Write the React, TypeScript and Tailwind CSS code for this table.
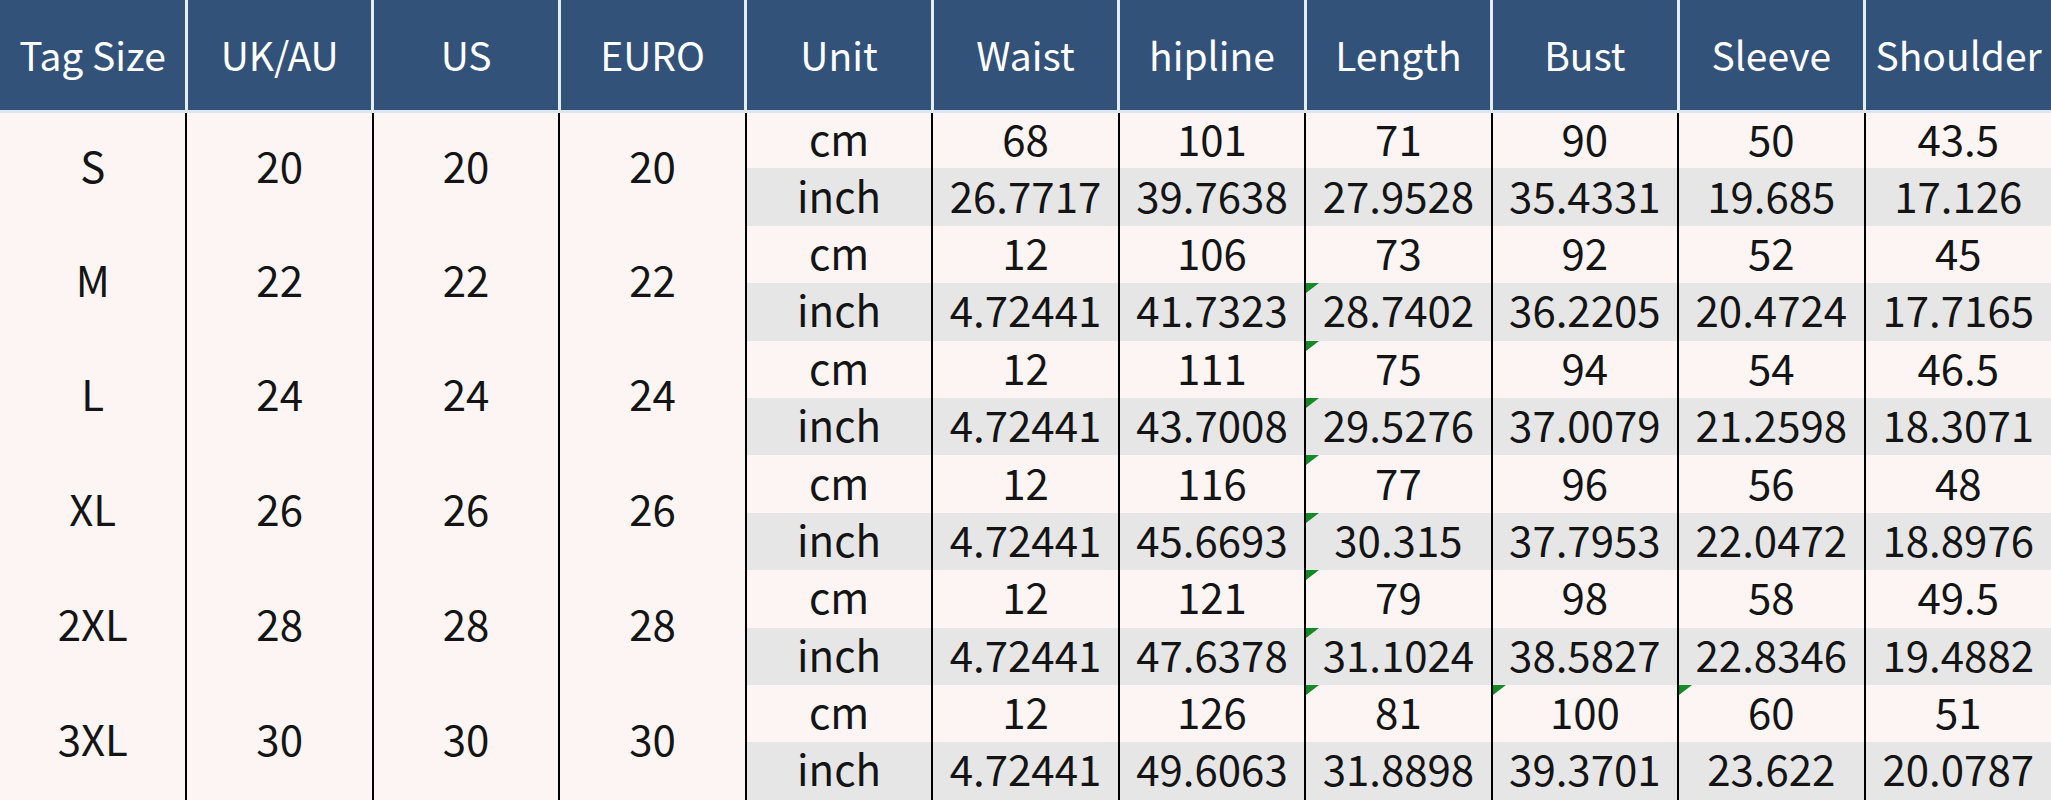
import React from 'react';

type Size = {
  tag: string;
  n: string;
  cm: string[];
  inch: string[];
};

const headers = ['Tag Size', 'UK/AU', 'US', 'EURO', 'Unit', 'Waist', 'hipline', 'Length', 'Bust', 'Sleeve', 'Shoulder'];

const sizes: Size[] = [
  { tag: 'S', n: '20', cm: ['68', '101', '71', '90', '50', '43.5'], inch: ['26.7717', '39.7638', '27.9528', '35.4331', '19.685', '17.126'] },
  { tag: 'M', n: '22', cm: ['12', '106', '73', '92', '52', '45'], inch: ['4.72441', '41.7323', '28.7402', '36.2205', '20.4724', '17.7165'] },
  { tag: 'L', n: '24', cm: ['12', '111', '75', '94', '54', '46.5'], inch: ['4.72441', '43.7008', '29.5276', '37.0079', '21.2598', '18.3071'] },
  { tag: 'XL', n: '26', cm: ['12', '116', '77', '96', '56', '48'], inch: ['4.72441', '45.6693', '30.315', '37.7953', '22.0472', '18.8976'] },
  { tag: '2XL', n: '28', cm: ['12', '121', '79', '98', '58', '49.5'], inch: ['4.72441', '47.6378', '31.1024', '38.5827', '22.8346', '19.4882'] },
  { tag: '3XL', n: '30', cm: ['12', '126', '81', '100', '60', '51'], inch: ['4.72441', '49.6063', '31.8898', '39.3701', '23.622', '20.0787'] },
];

// sub-row index -> value columns (0 = Waist) carrying the little green corner mark
const marks: Record<number, number[]> = {
  3: [2], 4: [2], 5: [2], 6: [2], 7: [2], 8: [2], 9: [2], 10: [2, 3, 4],
};

const Mark = () => (
  <svg className="absolute left-0 top-0" width="13" height="10" viewBox="0 0 13 10">
    <polygon points="0,0 13,0 0,10" fill="#138a25" />
  </svg>
);

const cell = 'p-0 pb-[5px] text-center text-[42px] font-normal leading-none text-[#141414]';
const tall = 'p-0 pb-[9px] text-center text-[42px] font-normal leading-none text-[#141414]';

export default function App() {
  return (
    <div className="w-[2051px] h-[800px] overflow-hidden bg-[#fcf5f4] font-['Noto_Sans_CJK_SC','Noto_Sans',sans-serif]">
      <table className="w-full table-fixed border-collapse">
        <thead>
          <tr className="h-[111px] bg-[#33527a]">
            {headers.map((h, i) => (
              <th
                key={h}
                className={`p-0 text-[39px] font-normal leading-none text-white border-b-[3px] border-b-[#dbe6f1] ${i > 0 ? 'border-l-[3px] border-l-[#e4edf6]' : ''}`}
              >
                {h}
              </th>
            ))}
          </tr>
        </thead>
        <tbody>
          {sizes.map((s, si) =>
            ['cm', 'inch'].map((unit, ui) => {
              const row = si * 2 + ui;
              const vals = ui === 0 ? s.cm : s.inch;
              const bg = ui === 0 ? 'bg-[#fcf5f4]' : 'bg-[#e6e6e6]';
              return (
                <tr key={row} className="h-[57.4px]">
                  {ui === 0 && (
                    <>
                      <td rowSpan={2} className={tall}>{s.tag}</td>
                      <td rowSpan={2} className={`${tall} border-l-2 border-black`}>{s.n}</td>
                      <td rowSpan={2} className={`${tall} border-l-2 border-black`}>{s.n}</td>
                      <td rowSpan={2} className={`${tall} border-l-2 border-black`}>{s.n}</td>
                    </>
                  )}
                  <td className={`${cell} border-l-2 border-black ${bg}`}>{unit}</td>
                  {vals.map((v, vi) => (
                    <td key={vi} className={`relative ${cell} border-l-2 border-black ${bg}`}>
                      {marks[row]?.includes(vi) && <Mark />}
                      {v}
                    </td>
                  ))}
                </tr>
              );
            })
          )}
        </tbody>
      </table>
    </div>
  );
}
